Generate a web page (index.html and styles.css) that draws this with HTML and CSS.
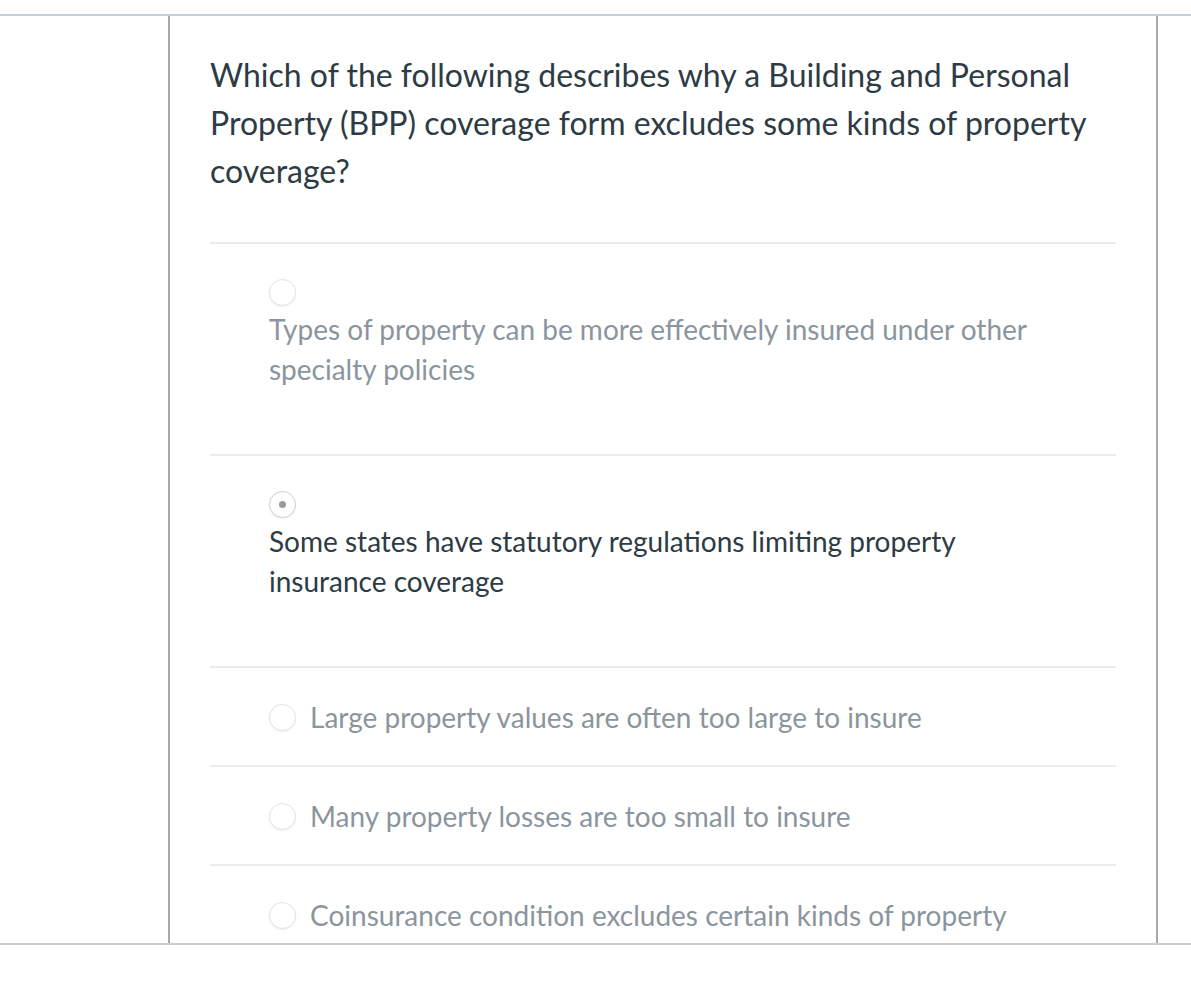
FILE: index.html
```html
<!DOCTYPE html>
<html lang="en">
<head>
  <meta charset="UTF-8" />
  <title>Quiz Question</title>
  <link rel="stylesheet" href="styles.css">
</head>
<body>

  <div class="page">
    <div class="gutter"></div>

    <!-- question panel -->
    <div class="panel">
      <div class="question-text">
        Which of the following describes why a Building and Personal Property (BPP) coverage form excludes some kinds of property coverage?
      </div>

      <div class="answers">
        <div class="answer stacked">
          <span class="radio"></span>
          <div class="answer-label">Types of property can be more effectively insured under other specialty policies</div>
        </div>

        <div class="answer stacked selected">
          <span class="radio"></span>
          <div class="answer-label">Some states have statutory regulations limiting property insurance coverage</div>
        </div>

        <div class="answer inline">
          <span class="radio"></span>
          <div class="answer-label">Large property values are often too large to insure</div>
        </div>

        <div class="answer inline">
          <span class="radio"></span>
          <div class="answer-label">Many property losses are too small to insure</div>
        </div>

        <div class="answer inline">
          <span class="radio"></span>
          <div class="answer-label">Coinsurance condition excludes certain kinds of property</div>
        </div>
      </div>
    </div>

    <div class="gutter-right"></div>
  </div>

</body>
</html>
```

FILE: styles.css
```css
* {
  box-sizing: border-box;
}

body {
  margin: 0;
  padding: 0;
  background: #fff;
  font-family: Lato, 'Open Sans', sans-serif;
  color: #2d3b45;
}

.page {
  margin-top: 14px;
  display: flex;
  border-top: 2px solid #c7cdd1;
  border-bottom: 2px solid #c7cdd1;
  height: 931px;
  overflow: hidden;
}

.gutter {
  width: 168px;
  flex-shrink: 0;
}

.gutter-right {
  flex: 1;
}

/* panel with the question */
.panel {
  width: 990px;
  flex-shrink: 0;
  border-left: 2px solid #a9a9a9;
  border-right: 2px solid #a9a9a9;
  padding: 35px 40px 0 40px;
  overflow: hidden;
}

.question-text {
  font-size: 32px;
  line-height: 48px;
  padding-bottom: 47px;
  border-bottom: 2px solid #ececec;
}

.answer {
  border-bottom: 2px solid #ececec;
  padding-left: 59px;
  color: #8b959e;
  font-size: 28px;
  line-height: 40px;
}

.answer-label {
  max-width: 790px;
}

.answer.stacked {
  padding-top: 35px;
  padding-bottom: 65px;
}

.answer.stacked .radio {
  display: block;
  margin-bottom: 3px;
}

.answer.inline {
  display: flex;
  align-items: center;
  gap: 14px;
  height: 99px;
  padding-top: 1px;
}

.answer.selected {
  color: #2d3b45;
}

.radio {
  width: 27px;
  height: 27px;
  border: 1px solid #e3e3e3;
  border-radius: 50%;
  background: #fff;
  box-shadow: 0 1px 2px rgba(0,0,0,0.06);
  position: relative;
  flex-shrink: 0;
}

.selected .radio {
  border-color: #cfcfcf;
}

.selected .radio::after {
  content: "";
  position: absolute;
  left: 50%;
  top: 50%;
  width: 7px;
  height: 7px;
  margin: -3.5px 0 0 -3.5px;
  border-radius: 50%;
  background: #9a9a9a;
}
```
